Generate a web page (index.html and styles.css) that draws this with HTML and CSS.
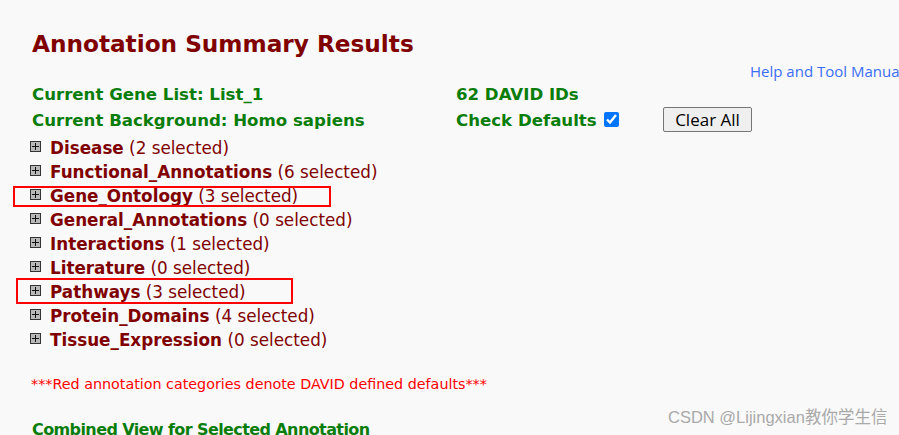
FILE: index.html
```html
<!DOCTYPE html>
<html lang="en">
<head>
  <meta charset="UTF-8">
  <title>Annotation Summary Results</title>
  <link rel="stylesheet" href="styles.css">
</head>
<body>
  <div class="page">
    <h1 class="title">Annotation Summary Results</h1>
    <a class="help-link" href="#">Help and Tool Manual</a>

    <div class="summary">
      <div class="label">Current Gene List: List_1</div>
      <div class="label">62 DAVID IDs</div>
      <div></div>
      <div class="label">Current Background: Homo sapiens</div>
      <div class="label">Check Defaults <input type="checkbox" class="check" checked></div>
      <div><button class="clear-btn">Clear All</button></div>
    </div>

    <ul class="categories">
      <li><span class="plus"></span><b>Disease</b> (2 selected)</li>
      <li><span class="plus"></span><b>Functional_Annotations</b> (6 selected)</li>
      <li><span class="plus"></span><b>Gene_Ontology</b> (3 selected)<span class="mark mark-go"></span></li>
      <li><span class="plus"></span><b>General_Annotations</b> (0 selected)</li>
      <li><span class="plus"></span><b>Interactions</b> (1 selected)</li>
      <li><span class="plus"></span><b>Literature</b> (0 selected)</li>
      <li><span class="plus"></span><b>Pathways</b> (3 selected)<span class="mark mark-path"></span></li>
      <li><span class="plus"></span><b>Protein_Domains</b> (4 selected)</li>
      <li><span class="plus"></span><b>Tissue_Expression</b> (0 selected)</li>
    </ul>

    <p class="note">***Red annotation categories denote DAVID defined defaults***</p>

    <h2 class="combined">Combined View for Selected Annotation</h2>
  </div>
  <div class="watermark">CSDN @Lijingxian教你学生信</div>
</body>
</html>
```

FILE: styles.css
```css
html {
  overflow: hidden;
}

body {
  margin: 0;
  padding: 0;
  background-color: #f9f9f9;
  font-family: "DejaVu Sans", Verdana, sans-serif;
  height: 435px;
  position: relative;
}

.page {
  padding: 30px 0 0 32px;
}

.title {
  margin: 0;
  font-size: 23.2px;
  line-height: 28px;
  color: #800000;
}

.help-link {
  display: block;
  margin: 0 0 0 718px;
  white-space: nowrap;
  font-family: "Open Sans", "Liberation Sans", sans-serif;
  font-size: 15px;
  line-height: 26px;
  color: #3b6ef5;
  text-decoration: none;
}

.summary {
  display: grid;
  grid-template-columns: 424px 207px auto;
  grid-auto-rows: 26px;
  align-items: center;
  margin-top: -3px;
}

.label {
  font-size: 16.6px;
  font-weight: bold;
  color: #0a7d0a;
  white-space: nowrap;
}

.check {
  width: 15px;
  height: 15px;
  margin: 0 0 0 2px;
  vertical-align: -1px;
  accent-color: #0075ff;
}

.clear-btn {
  font-family: "Open Sans", "Liberation Sans", sans-serif;
  font-size: 17px;
  width: 89px;
  height: 25px;
  padding: 0;
  margin-top: -1px;
  background-color: #efefef;
  border: 1px solid #767676;
  border-radius: 2px;
  color: #000;
}

.categories {
  list-style: none;
  margin: 3px 0 0 -2px;
  padding: 0;
}

.categories li {
  position: relative;
  display: flex;
  align-items: center;
  height: 24px;
  font-size: 16.8px;
  color: #800000;
  white-space: pre;
}

.categories b {
  font-weight: bold;
}

.plus {
  position: relative;
  width: 9px;
  height: 9px;
  margin-right: 9px;
  margin-top: -3px;
  border: 1px solid #333;
  background-color: #b8b8b8;
}

.plus::before,
.plus::after {
  content: "";
  position: absolute;
  background-color: #111;
}

.plus::before {
  left: 1px;
  top: 4px;
  width: 7px;
  height: 1px;
}

.plus::after {
  left: 4px;
  top: 1px;
  width: 1px;
  height: 7px;
}

/* red boxes drawn over the screenshot */
.mark {
  position: absolute;
  border: 2px solid #ff0000;
}

.mark-go {
  left: -17px;
  top: 2px;
  width: 314px;
  height: 17px;
}

.mark-path {
  left: -14px;
  top: -2px;
  width: 273px;
  height: 22px;
}

.note {
  margin: 23px 0 0 -1px;
  font-size: 14.3px;
  line-height: 18px;
  color: #ff0000;
}

.combined {
  margin: 27px 0 0 0;
  font-size: 16px;
  line-height: 20px;
  letter-spacing: -0.6px;
  color: #0a7d0a;
}

.watermark {
  position: absolute;
  left: 668px;
  top: 404px;
  font-family: "Liberation Sans", "Noto Sans CJK SC", sans-serif;
  font-size: 16.5px;
  color: #a9a9a9;
  white-space: nowrap;
}
```
